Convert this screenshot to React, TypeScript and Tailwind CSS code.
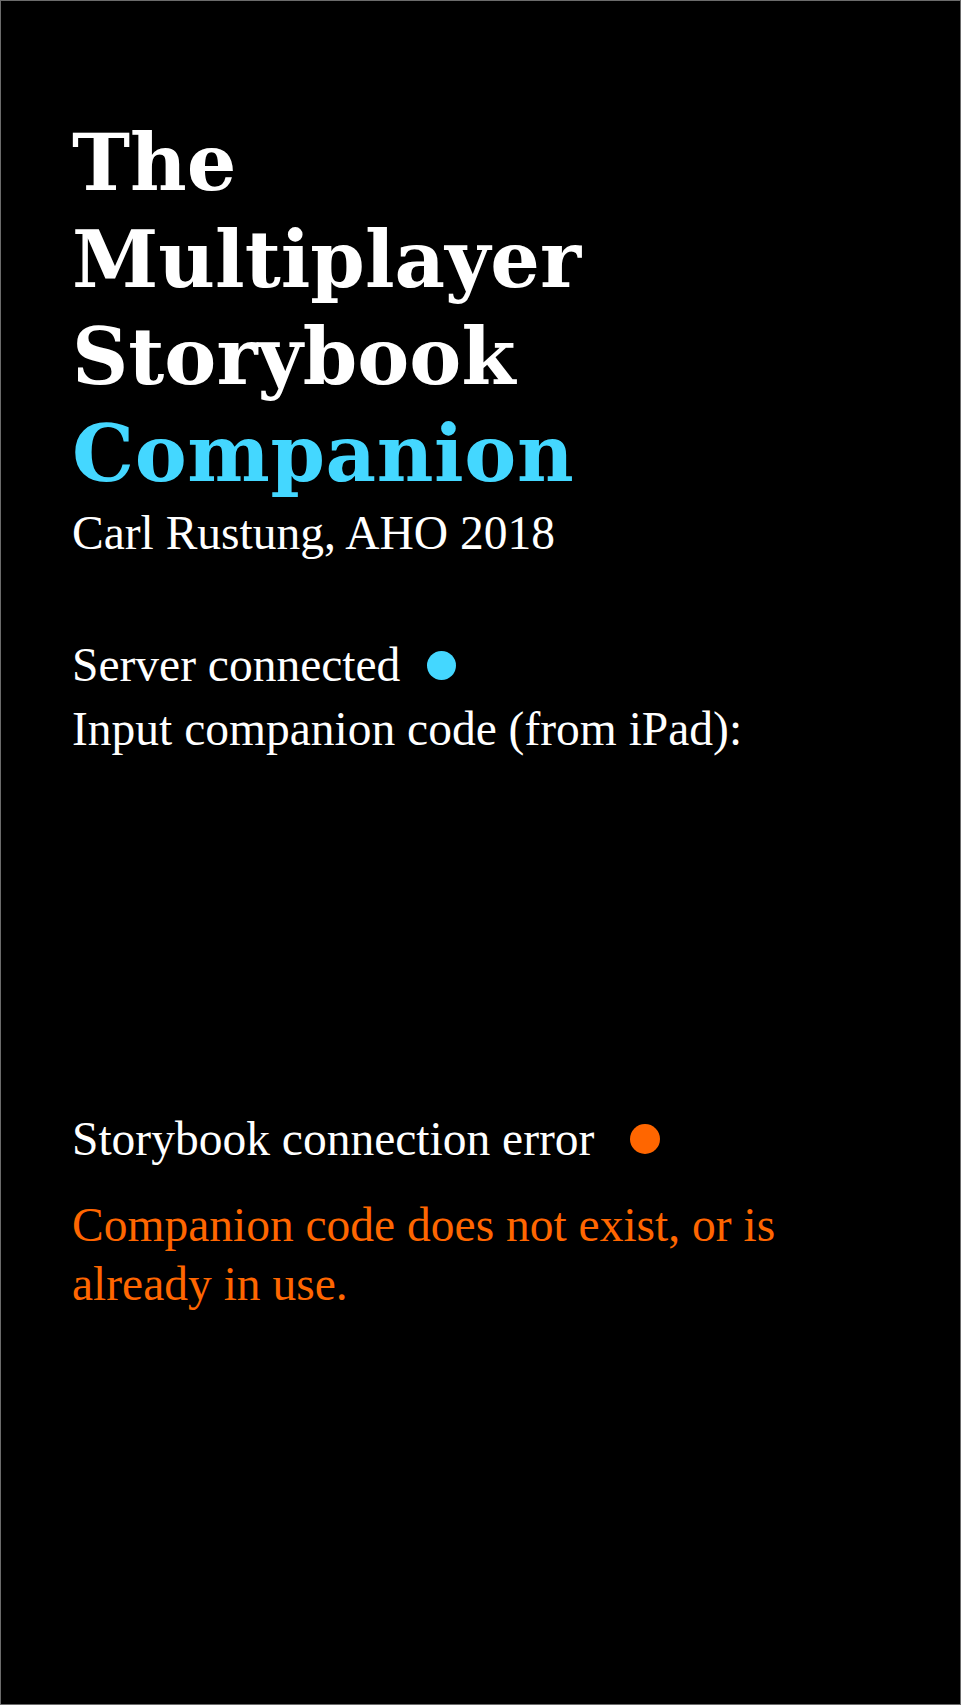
export default function App() {
  return (
    <div className="min-h-[1705px] w-full bg-black border border-[#6b6b6b] px-[71px] pt-[113px] text-white">
      {/* Title */}
      <h1 className="font-['DejaVu_Serif',serif] font-bold text-[78px] leading-[97px]">
        The
        <br />
        Multiplayer
        <br />
        Storybook
        <br />
        <span className="text-[#44d7ff] tracking-[0.6px]">Companion</span>
      </h1>

      <div className="font-['Liberation_Serif',serif] text-[47.5px]">
        <p className="mt-[2px] leading-[58px]">Carl Rustung, AHO 2018</p>

        {/* Server status */}
        <div className="mt-[71px] flex items-center gap-[27px] leading-[64px]">
          <span>Server connected</span>
          <span className="h-[29px] w-[29px] rounded-full bg-[#44d7ff]" />
        </div>
        <p className="leading-[64px]">Input companion code (from iPad):</p>

        {/* Storybook status */}
        <div className="mt-[346px] flex items-center gap-[36px] leading-[64px]">
          <span>Storybook connection error</span>
          <span className="h-[30px] w-[30px] rounded-full bg-[#ff6600]" />
        </div>
        <p className="mt-[25px] max-w-[780px] leading-[59px] text-[#ff6600]">
          Companion code does not exist, or is already in use.
        </p>
      </div>
    </div>
  );
}
